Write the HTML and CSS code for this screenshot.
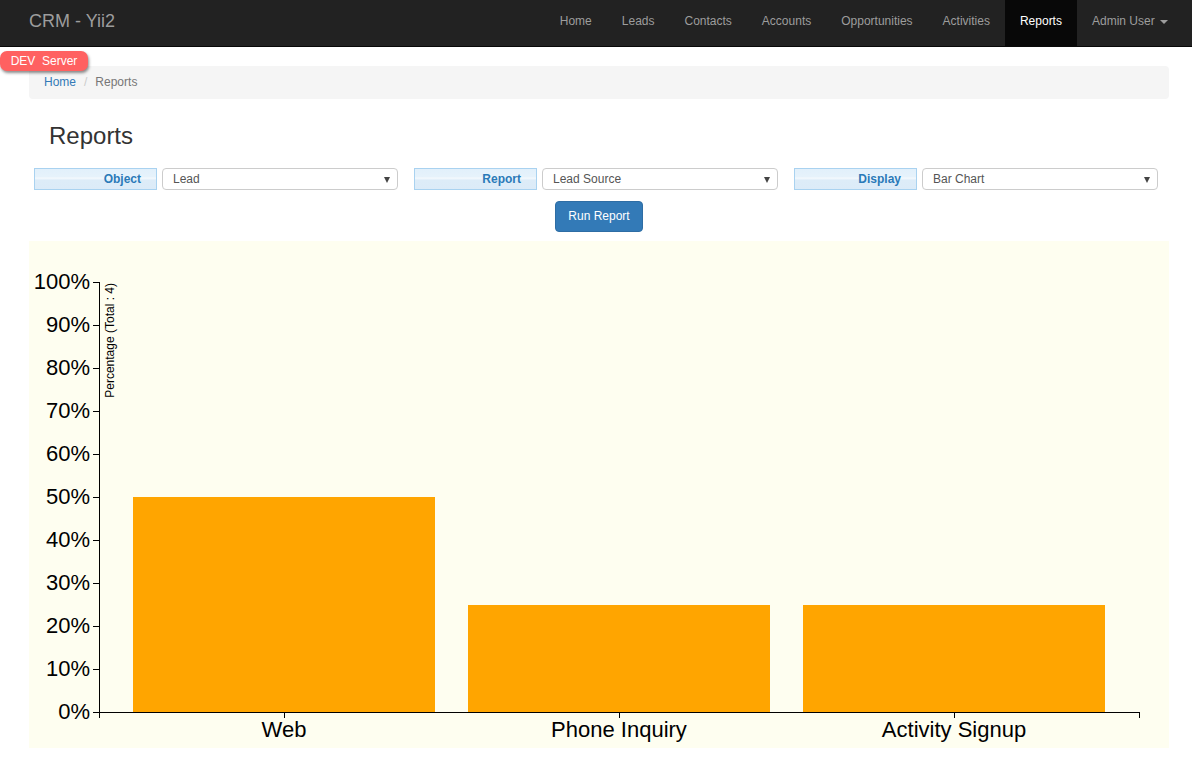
FILE: index.html
```html
<!DOCTYPE html>
<html>
<head>
<meta charset="utf-8">
<title>CRM - Yii2 | Reports</title>
<link rel="stylesheet" href="styles.css">
</head>
<body>
<nav class="navbar">
  <a class="brand" href="#">CRM - Yii2</a>
  <ul class="nav">
    <li><a href="#">Home</a></li>
    <li><a href="#">Leads</a></li>
    <li><a href="#">Contacts</a></li>
    <li><a href="#">Accounts</a></li>
    <li><a href="#">Opportunities</a></li>
    <li><a href="#">Activities</a></li>
    <li class="active"><a href="#">Reports</a></li>
    <li><a href="#">Admin User <span class="caret"></span></a></li>
  </ul>
</nav>
<div class="dev-badge">DEV&nbsp; Server</div>
<main class="container">
  <ol class="breadcrumb">
    <li><a href="#">Home</a></li>
    <li class="sep">/</li>
    <li class="current">Reports</li>
  </ol>
  <h1 class="title">Reports</h1>
  <div class="filters">
    <div class="field">
      <div class="field-label">Object</div>
      <div class="select">Lead<span class="arrow"></span></div>
    </div>
    <div class="field">
      <div class="field-label">Report</div>
      <div class="select">Lead Source<span class="arrow"></span></div>
    </div>
    <div class="field">
      <div class="field-label">Display</div>
      <div class="select">Bar Chart<span class="arrow"></span></div>
    </div>
  </div>
  <div class="actions"><button class="btn">Run Report</button></div>
  <div class="chart">
    <svg width="1140" height="507" viewBox="0 0 1140 507" shape-rendering="crispEdges">
      <g class="bars">
        <rect x="104" y="256" width="302" height="215"></rect>
        <rect x="439" y="364" width="302" height="107"></rect>
        <rect x="774" y="364" width="302" height="107"></rect>
      </g>
      <g class="axis" fill="none" stroke="#000" stroke-width="1">
        <path d="M64,41.5H70.5V471.5H64"></path>
        <path d="M64,84.5H70M64,127.5H70M64,170.5H70M64,213.5H70M64,256.5H70M64,299.5H70M64,342.5H70M64,385.5H70M64,428.5H70"></path>
        <path d="M70.5,477V471.5H1110.5V477"></path>
        <path d="M255.5,471V477M590.5,471V477M925.5,471V477"></path>
      </g>
      <g class="ylabels" text-anchor="end">
        <text x="61" y="48">100%</text>
        <text x="61" y="91">90%</text>
        <text x="61" y="134">80%</text>
        <text x="61" y="177">70%</text>
        <text x="61" y="220">60%</text>
        <text x="61" y="263">50%</text>
        <text x="61" y="306">40%</text>
        <text x="61" y="349">30%</text>
        <text x="61" y="392">20%</text>
        <text x="61" y="435">10%</text>
        <text x="61" y="478">0%</text>
      </g>
      <text class="ytitle" transform="rotate(-90)" x="-42" y="85" text-anchor="end">Percentage (Total : 4)</text>
      <g class="xlabels" text-anchor="middle">
        <text x="255" y="496">Web</text>
        <text x="590" y="496">Phone Inquiry</text>
        <text x="925" y="496">Activity Signup</text>
      </g>
    </svg>
  </div>
</main>
</body>
</html>
```
FILE: styles.css
```css
* { box-sizing: border-box; }
html, body { margin: 0; padding: 0; }
body {
  font-family: "Liberation Sans", Arial, Helvetica, sans-serif;
  font-size: 12px;
  line-height: 17px;
  color: #333;
  background: #fff;
  overflow: hidden;
}
a { text-decoration: none; }

.navbar {
  height: 47px;
  background: #222;
  border-bottom: 1px solid #080808;
  display: flex;
  justify-content: space-between;
  align-items: stretch;
  padding-left: 29px;
}
.brand {
  color: #9d9d9d;
  font-size: 18px;
  line-height: 42px;
}
.nav {
  list-style: none;
  margin: 0 9px 0 0;
  padding: 0;
  display: flex;
}
.nav li a {
  display: block;
  height: 46px;
  padding: 0 15px;
  line-height: 42px;
  color: #9d9d9d;
}
.nav li.active a {
  background: #080808;
  color: #fff;
}
.caret {
  display: inline-block;
  width: 0;
  height: 0;
  margin-left: 2px;
  vertical-align: middle;
  border-top: 4px solid #9d9d9d;
  border-left: 4px solid transparent;
  border-right: 4px solid transparent;
}

.dev-badge {
  position: absolute;
  left: 0;
  top: 51px;
  width: 88px;
  height: 20px;
  background: #ff6161;
  color: #fff;
  border-radius: 7px;
  box-shadow: 1px 2px 3px rgba(0, 0, 0, 0.45);
  text-align: center;
  line-height: 20px;
  font-size: 12px;
  z-index: 2;
}

.container {
  width: 1140px;
  margin-left: 29px;
  padding-top: 19px;
}

.breadcrumb {
  list-style: none;
  margin: 0;
  height: 33px;
  padding: 8px 15px;
  background: #f5f5f5;
  border-radius: 4px;
  display: flex;
}
.breadcrumb a { color: #337ab7; }
.breadcrumb .sep { color: #ccc; padding: 0 8px 0 8px; }
.breadcrumb .current { color: #777; }

.title {
  margin: 24px 0 0 20px;
  font-size: 24px;
  font-weight: 400;
  line-height: 26px;
  color: #333;
}

.filters {
  margin-top: 19px;
  display: grid;
  grid-template-columns: repeat(3, 380px);
}
.field {
  display: flex;
  gap: 5px;
  padding-left: 5px;
}
.field-label {
  width: 123px;
  height: 22px;
  border: 1px solid #a9d2f0;
  background: linear-gradient(to bottom, #e2f0fb 0%, #e6f2fb 38%, #f4f9fd 46%, #ddecf8 56%, #dcebf8 100%);
  color: #2a7ab8;
  font-weight: bold;
  text-align: right;
  padding-right: 15px;
  line-height: 20px;
}
.select {
  position: relative;
  width: 236px;
  height: 22px;
  border: 1px solid #ccc;
  border-radius: 4px;
  background: #fff;
  color: #555;
  padding-left: 10px;
  line-height: 20px;
}
.arrow {
  position: absolute;
  right: 7px;
  top: 8px;
  width: 0;
  height: 0;
  border-top: 6px solid #444;
  border-left: 3.5px solid transparent;
  border-right: 3.5px solid transparent;
}

.actions {
  margin-top: 11px;
  display: flex;
  justify-content: center;
}
.btn {
  font-family: inherit;
  font-size: 12px;
  line-height: 17px;
  height: 31px;
  padding: 6px 12px;
  color: #fff;
  background: #337ab7;
  border: 1px solid #2e6da4;
  border-radius: 4px;
}

.chart {
  margin-top: 9px;
  height: 507px;
  background: #fefef0;
}
.chart svg { display: block; }
.bars rect { fill: #ffa500; }
.ylabels text, .xlabels text {
  font-family: "Liberation Sans", Arial, sans-serif;
  font-size: 22px;
  fill: #000;
}
.ytitle {
  font-family: "Liberation Sans", Arial, sans-serif;
  font-size: 12px;
  fill: #000;
}
```
